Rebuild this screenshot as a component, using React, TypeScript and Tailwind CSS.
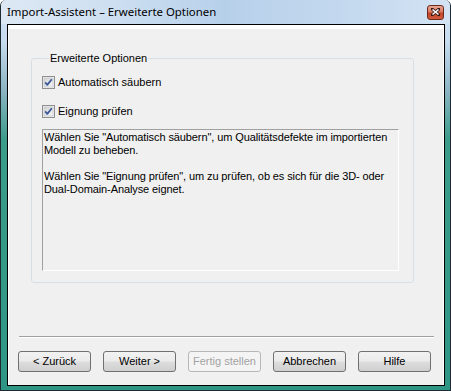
import React from "react";

function Check() {
  return (
    <svg width="13" height="13" viewBox="0 0 13 13" className="shrink-0">
      <defs>
        <linearGradient id="cbg" x1="0" y1="0" x2="1" y2="1">
          <stop offset="0" stopColor="#d4d4d4" />
          <stop offset="1" stopColor="#f7f7f7" />
        </linearGradient>
      </defs>
      <rect x="0.5" y="0.5" width="12" height="12" fill="#f4f4f4" stroke="#8e8f8f" />
      <rect x="2" y="2" width="9" height="9" fill="url(#cbg)" stroke="#b8bcc2" strokeWidth="0.6" />
      <path d="M3.2 6.4 L5.3 8.9 L9.8 3.2" fill="none" stroke="#3c5a9a" strokeWidth="1.8" strokeLinejoin="round" />
    </svg>
  );
}

function Btn({ label, disabled }: { label: string; disabled?: boolean }) {
  return (
    <div
      className={
        "w-[73px] h-[21px] rounded-[3px] border flex items-center justify-center text-[11px] leading-none " +
        (disabled
          ? "border-[#b5b8bb] bg-[#f4f4f4] text-[#a3a3a3]"
          : "border-[#707070] bg-[linear-gradient(180deg,#f2f2f2_0%,#ebebeb_48%,#dddddd_52%,#cfcfcf_100%)] text-black")
      }
    >
      {label}
    </div>
  );
}

export default function App() {
  return (
    <div
      className="w-[451px] h-[391px] flex flex-col border-x border-b border-[#1f2b33] rounded-t-[6px] overflow-hidden bg-[linear-gradient(180deg,#d3e3f3_0px,#c9dcf0_40px,#8db5c4_90px,#3b9c8a_140px,#2f9685_100%)]"
      style={{ fontFamily: '"Liberation Sans", Arial, sans-serif' }}
    >
      <div className="h-[24px] shrink-0 flex items-center justify-between pl-[6px] pr-[6px] bg-[linear-gradient(90deg,#dde8f4_0%,#cddff1_25%,#b7d0ea_50%,#c3d8ee_75%,#d3e3f3_100%)]">
        <span
          className="text-[11.4px] text-black leading-none"
          style={{ fontFamily: '"Noto Sans", "Open Sans", sans-serif' }}
        >
          Import-Assistent – Erweiterte Optionen
        </span>
        <div className="w-[17px] h-[15px] rounded-[3px] border border-[#6e2a1c] bg-[linear-gradient(180deg,#e9a593_0%,#d87a60_45%,#c0442a_55%,#d25a3c_100%)] flex items-center justify-center">
          <svg width="9" height="8" viewBox="0 0 9 8">
            <path d="M1 1 L8 7 M8 1 L1 7" stroke="#3a1a12" strokeWidth="3" strokeLinecap="square" />
            <path d="M1.5 1.5 L7.5 6.5 M7.5 1.5 L1.5 6.5" stroke="#ffffff" strokeWidth="1.6" />
          </svg>
        </div>
      </div>

      <div className="ml-[6px] mr-[5px] mb-[4px] h-[362px] border border-black bg-[#f0f0f0] shadow-[inset_0_4px_0_#ffffff,inset_1px_0_0_#ffffff,inset_-1px_0_0_#ffffff] flex flex-col text-[11px] text-black">
        <fieldset className="mt-[27px] ml-[23px] w-[383px] h-[231px] border border-[#d5dfe5] rounded-[3px] pl-[10px] pr-0 shrink-0">
          <legend className="ml-[7px] px-[1px] leading-[13px]">Erweiterte Optionen</legend>
          <div className="mt-[11px] flex items-center gap-[3px] h-[13px] leading-[13px]">
            <Check />
            <span>Automatisch säubern</span>
          </div>
          <div className="mt-[16px] flex items-center gap-[3px] h-[13px] leading-[13px]">
            <Check />
            <span>Eignung prüfen</span>
          </div>
          <div className="mt-[11px] w-[357px] h-[142px] border-t border-l border-[#a0a0a0] border-r border-r-white border-b border-b-white pl-[1px] pt-[1px] leading-[13px] tracking-[-0.1px]">
            <div>Wählen Sie "Automatisch säubern", um Qualitätsdefekte im importierten</div>
            <div>Modell zu beheben.</div>
            <div className="h-[13px]" />
            <div>Wählen Sie "Eignung prüfen", um zu prüfen, ob es sich für die 3D- oder</div>
            <div>Dual-Domain-Analyse eignet.</div>
          </div>
        </fieldset>

        <div className="mt-[53px] ml-[11px] mr-[10px] h-[2px] border-t border-[#a0a0a0] border-b border-b-white shrink-0" />

        <div className="mt-[13px] pl-[10px] flex gap-[12px]">
          <Btn label="< Zurück" />
          <Btn label="Weiter >" />
          <Btn label="Fertig stellen" disabled />
          <Btn label="Abbrechen" />
          <Btn label="Hilfe" />
        </div>
      </div>
    </div>
  );
}
